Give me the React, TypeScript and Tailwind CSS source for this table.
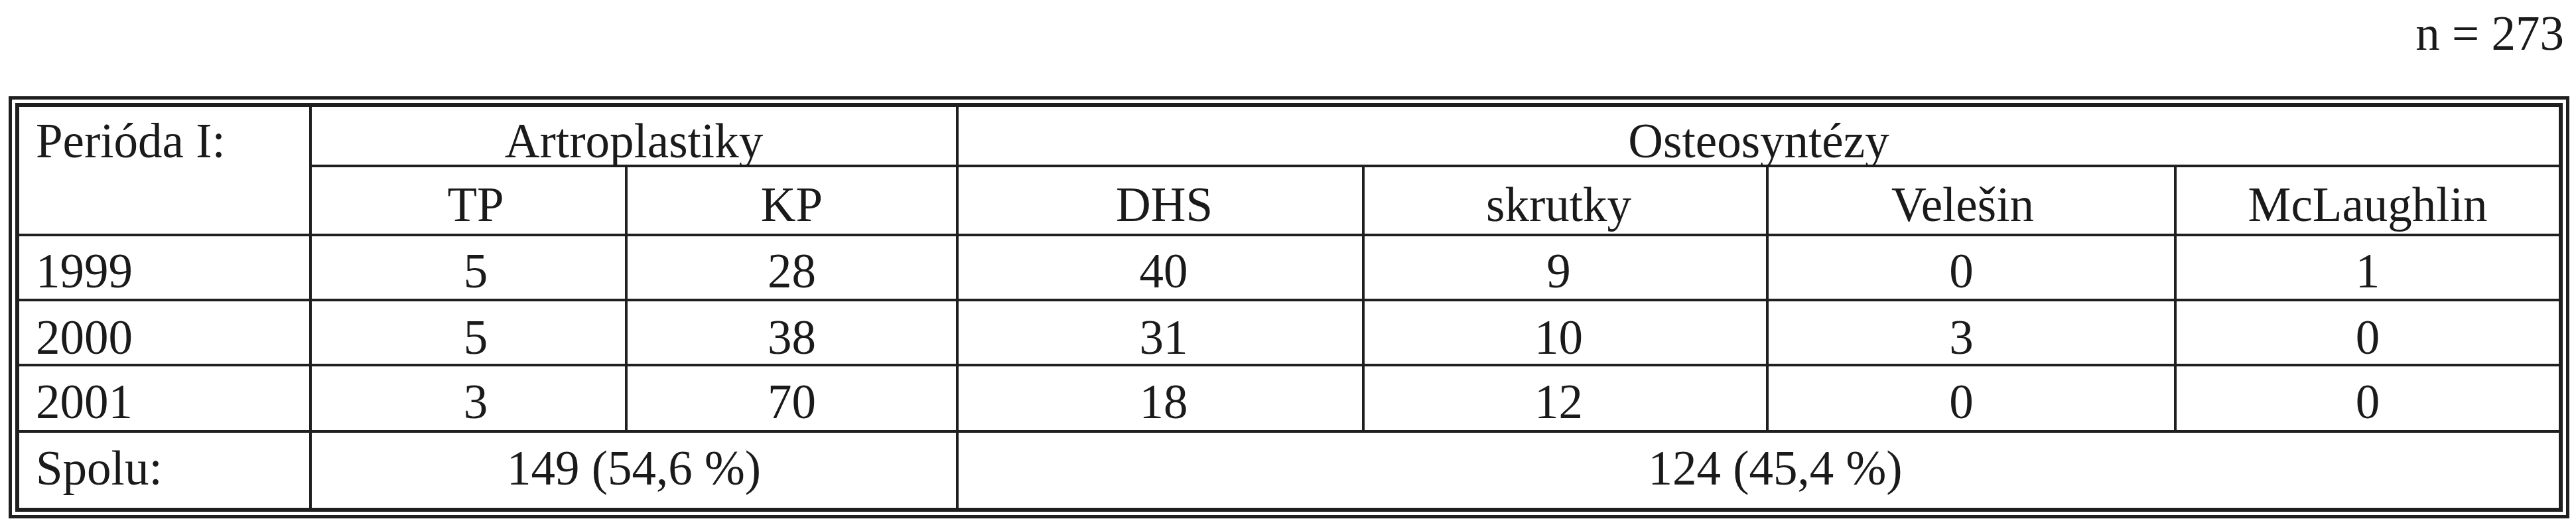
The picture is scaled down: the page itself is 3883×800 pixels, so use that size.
import React from "react";

const pad = ["pt-[16px]", "pt-[18px]", "pt-[17px]"];
const colPad = ["pl-[22px]", "", "pl-[10px]", "pr-[20px]", "pr-[30px]", ""];

const dataRows: { year: string; vals: string[] }[] = [
  { year: "1999", vals: ["5", "28", "40", "9", "0", "1"] },
  { year: "2000", vals: ["5", "38", "31", "10", "3", "0"] },
  { year: "2001", vals: ["3", "70", "18", "12", "0", "0"] },
];

export default function App() {
  return (
    <div className="w-[3883px] h-[800px] bg-white text-[#1a1a1a] pt-[14px] font-['Liberation_Serif','Times_New_Roman',serif]">
      <div className="text-right pr-[18px] text-[73px] leading-none">n = 273</div>
      <div className="ml-[13px] mt-[58px] w-[3860px] border-[5px] border-[#1f1f1f] p-[5px] bg-white">
        <div className="border-[6px] border-[#1f1f1f]">
          <div className="grid grid-cols-[437px_472px_495px_608px_605px_611px_576px] grid-rows-[87px_100px_94px_94px_96px_113px] gap-[4px] bg-[#1f1f1f] text-[73px] leading-none">
            <div className="row-span-2 bg-white pl-[25px] pt-[15px]">Perióda I:</div>
            <div className="col-span-2 bg-white text-center pt-[15px]">Artroplastiky</div>
            <div className="col-span-4 bg-white text-center pt-[15px]">Osteosyntézy</div>
            <div className="bg-white text-center pt-[20px] pl-[22px]">TP</div>
            <div className="bg-white text-center pt-[20px]">KP</div>
            <div className="bg-white text-center pt-[20px] pl-[12px]">DHS</div>
            <div className="bg-white text-center pt-[20px] pr-[20px]">skrutky</div>
            <div className="bg-white text-center pt-[20px] pr-[26px]">Velešin</div>
            <div className="bg-white text-center pt-[20px]">McLaughlin</div>
            {dataRows.map((r, i) => (
              <React.Fragment key={r.year}>
                <div className={`bg-white pl-[25px] ${pad[i]}`}>{r.year}</div>
                {r.vals.map((v, j) => (
                  <div key={j} className={`bg-white text-center ${pad[i]} ${colPad[j]}`}>
                    {v}
                  </div>
                ))}
              </React.Fragment>
            ))}
            <div className="bg-white pl-[25px] pt-[17px]">Spolu:</div>
            <div className="col-span-2 bg-white text-center pt-[17px]">149 (54,6 %)</div>
            <div className="col-span-4 bg-white text-center pt-[17px] pl-[50px]">124 (45,4 %)</div>
          </div>
        </div>
      </div>
    </div>
  );
}
